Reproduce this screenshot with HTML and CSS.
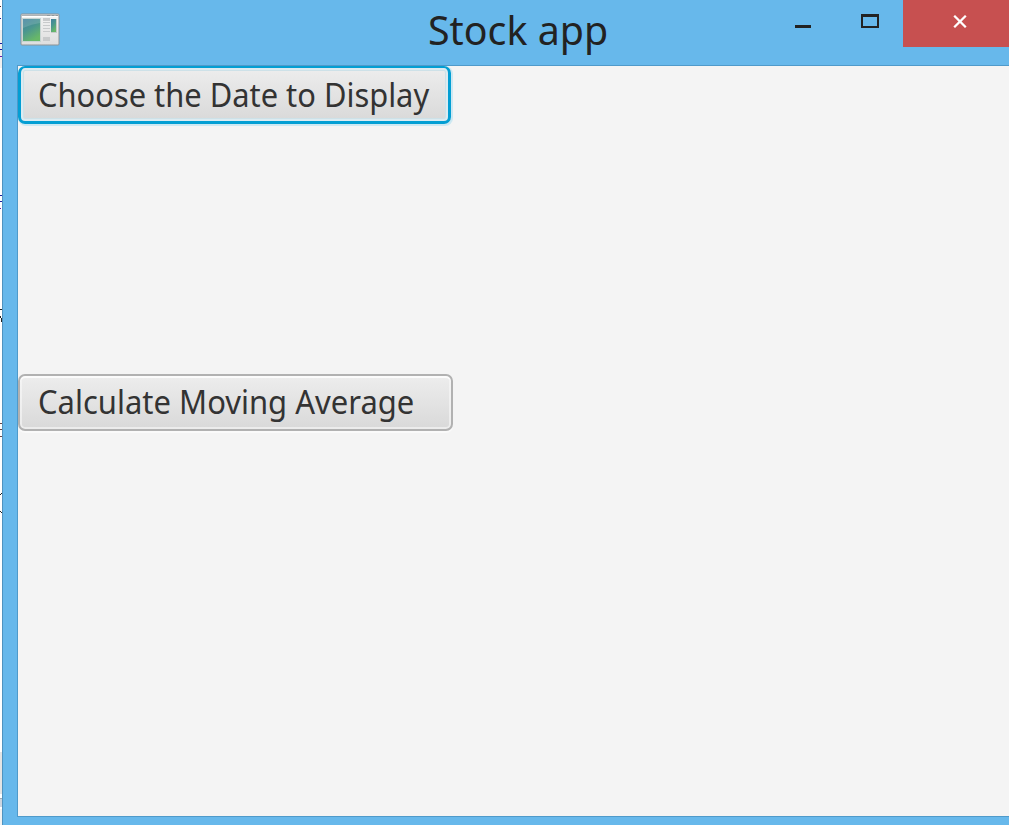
FILE: index.html
```html
<!DOCTYPE html>
<html lang="en">
<head>
<meta charset="utf-8">
<title>Stock app</title>
<link rel="stylesheet" href="styles.css">
</head>
<body>
<div class="desktop">
  <svg class="backdrop" width="2" height="825" shape-rendering="crispEdges">
    <path fill="#fff" d="M0 0h2v825H0z"/>
    <path fill="#f0f0f0" d="M0 30h2v38H0z"/>
    <path fill="#5a2a2a" d="M0 6h1v1H0z"/>
    <path fill="#1c1c9c" d="M0 18h1v1H0zM0 43h2v1H0zM0 49h2v1H0zM0 195h2v1H0zM0 201h2v1H0z"/>
    <path fill="#6a1cae" d="M0 56h2v1H0zM0 208h1v1H0z"/>
    <path fill="#222" d="M0 309h2v1H0zM0 316h1v2H0zM1 318h1v4H1zM1 493h1v1H1zM0 494h1v1H0zM0 511h1v1H0zM1 512h1v1H1z"/>
    <path fill="#6b4545" d="M0 423h2v1H0zM0 429h2v1H0zM0 436h2v1H0z"/>
    <path fill="#e4e4e4" d="M0 752h2v42H0z"/>
    <path fill="#a5acb5" d="M0 798h2v1H0z"/>
    <path fill="#ccd5e0" d="M0 799h2v8H0z"/>
    <path fill="#f2f2f2" d="M0 809h2v16H0z"/>
  </svg>
  <main class="window">
    <header class="titlebar">
      <svg class="app-icon" width="40" height="33" viewBox="0 0 40 33">
        <defs>
          <linearGradient id="pane" x1="0" y1="0" x2="0.5" y2="1">
            <stop offset="0" stop-color="#3f7f9f"/><stop offset="0.5" stop-color="#4a9590"/><stop offset="1" stop-color="#68b868"/>
          </linearGradient>
          <linearGradient id="frame" x1="0" y1="0" x2="0" y2="1">
            <stop offset="0" stop-color="#f4f4f4"/><stop offset="1" stop-color="#dedede"/>
          </linearGradient>
        </defs>
        <rect x="1" y="1" width="38" height="31" rx="1" fill="url(#frame)" stroke="#8d9396"/>
        <path fill="#aeb2b5" d="M1.500 1.500h37v1.500h-37z"/>
        <path fill="#92999d" d="M27 2h3v1h-3zM32 2h2v1h-2zM36 2h2v1h-2z"/>
        <path fill="#fff" d="M2 3h36v1H2z"/>
        <path fill="url(#pane)" stroke="#c7d5d2" d="M2.500 5.500h18v23h-18z"/>
        <path fill="#fff" opacity=".14" d="M3 6h17v4Q12 11 3 15z"/>
        <path fill="#c8cacb" d="M23 5h7v3h-7zM23 9h7v1h-7zM23 12h7v1h-7zM23 15h7v1h-7zM23 18h7v1h-7zM23 24h7v4h-7z"/>
        <path fill="url(#pane)" d="M31 6h5v13h-5z"/>
        <path fill="#c4cbc7" d="M36 6h1v14h-6v-1h5z"/>
      </svg>
      <h1 class="title"><span class="title-text">Stock app</span></h1>
      <div class="controls">
        <span class="control minimize"><svg width="16" height="3"><path fill="#222" d="M0 0h16v3H0z"/></svg></span>
        <span class="control maximize"><svg width="18" height="14"><path fill="#222" fill-rule="evenodd" d="M0 0h18v14H0zM2 3v9h14V3z"/></svg></span>
        <span class="control close"><svg width="14" height="13" viewBox="0 0 14 13"><path d="M1.200.800l11.600 11.400M12.800.800L1.200 12.200" stroke="#fff" stroke-width="2.300"/></svg></span>
      </div>
    </header>
    <section class="content">
      <button class="button button-focused"><span class="label choose">Choose the Date to Display</span></button>
      <button class="button button-average"><span class="label average">Calculate Moving Average</span></button>
    </section>
  </main>
</div>
</body>
</html>
```
FILE: styles.css
```css
* { box-sizing: border-box; }
body {
  margin: 0;
  width: 1009px;
  height: 825px;
  overflow: hidden;
  background: #67b8eb;
  font-family: "Noto Sans", "Open Sans", sans-serif;
}
svg { display: block; }
.desktop { display: flex; height: 825px; }
.backdrop { flex: none; }
.window {
  flex: 1;
  min-width: 0;
  display: flex;
  flex-direction: column;
  padding: 0 0 8px 14px;
  border-left: 1px solid #4f93bf;
  background: #67b8eb;
}
.titlebar { display: flex; height: 65px; flex: none; }
.app-icon { margin: 13px 0 0 3px; flex: none; }
.title {
  margin: 0 0 0 368px;
  width: 191px;
  font-size: 40px;
  font-weight: 400;
  line-height: 60px;
  color: #222;
  white-space: nowrap;
}
.title-text {
  display: inline-block;
  transform: scaleX(0.983);
  transform-origin: left center;
}
.controls { display: flex; flex: none; margin-left: 152px; }
.control { flex: none; }
.minimize { width: 66px; padding: 25px 0 0 24px; }
.maximize { width: 66px; padding: 14px 0 0 24px; }
.close { width: 106px; height: 47px; padding: 15px 0 0 50px; background: #c75050; }
.content {
  flex: 1;
  display: flex;
  flex-direction: column;
  align-items: flex-start;
  border: solid #4f9aca;
  border-width: 1px 0 1px 1px;
  background: #f4f4f4;
}
.button {
  height: 57px;
  padding: 0 0 2px 18px;
  border: 2px solid #b1b1b1;
  border-radius: 7px;
  background: linear-gradient(#ededed, #d9d9d9);
  box-shadow: inset 0 0 0 2px #f8f8f899, inset 0 2px #fff, 0 2px #fafafa;
  color: #333;
  font: 400 32px/50px "Noto Sans", "Open Sans", sans-serif;
  text-align: left;
  white-space: nowrap;
}
.button-focused {
  width: 433px;
  height: 58px;
  border: 3px solid #039ed3;
  border-top-width: 2px;
  padding: 2px 0 2px 17px;
  box-shadow: inset 0 0 0 2px #dcebf1, inset 0 0 0 3px #cde1e8, 1px 1px 0 1px #cde8f2;
}
.button-average { width: 435px; margin-top: 250px; }
.label { display: inline-block; transform-origin: left center; }
.choose { transform: scaleX(0.964); }
.average { transform: scaleX(0.968); }
```
